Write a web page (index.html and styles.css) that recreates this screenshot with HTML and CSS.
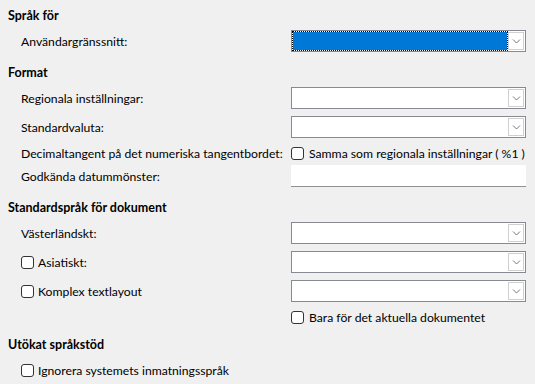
FILE: index.html
```html
<!DOCTYPE html>
<html lang="sv">
<head>
    <meta charset="UTF-8">
    <title>Språkinställningar</title>
    <link rel="stylesheet" href="styles.css">
</head>
<body>
    <div class="page">
        <h2 class="heading first">Språk för</h2>
        <div class="row">
            <span class="label">Användargränssnitt:</span>
            <div class="combo focused"><div class="field"></div><div class="drop"><svg width="9" height="5" viewBox="0 0 9 5"><path d="M1 0.5 L4.5 4 L8 0.5" fill="none" stroke="#777" stroke-width="1"/></svg></div></div>
        </div>

        <h2 class="heading">Format</h2>
        <div class="row">
            <span class="label">Regionala inställningar:</span>
            <div class="combo"><div class="field"></div><div class="drop"><svg width="9" height="5" viewBox="0 0 9 5"><path d="M1 0.5 L4.5 4 L8 0.5" fill="none" stroke="#777" stroke-width="1"/></svg></div></div>
        </div>
        <div class="row gap">
            <span class="label">Standardvaluta:</span>
            <div class="combo"><div class="field"></div><div class="drop"><svg width="9" height="5" viewBox="0 0 9 5"><path d="M1 0.5 L4.5 4 L8 0.5" fill="none" stroke="#777" stroke-width="1"/></svg></div></div>
        </div>
        <div class="row short">
            <span class="label">Decimaltangent på det numeriska tangentbordet:</span>
            <label class="check"><span class="box"></span>Samma som regionala inställningar ( %1 )</label>
        </div>
        <div class="row tight">
            <span class="label">Godkända datummönster:</span>
            <div class="entry"></div>
        </div>

        <h2 class="heading">Standardspråk för dokument</h2>
        <div class="row">
            <span class="label">Västerländskt:</span>
            <div class="combo"><div class="field"></div><div class="drop"><svg width="9" height="5" viewBox="0 0 9 5"><path d="M1 0.5 L4.5 4 L8 0.5" fill="none" stroke="#777" stroke-width="1"/></svg></div></div>
        </div>
        <div class="row gap">
            <label class="check label"><span class="box"></span>Asiatiskt:</label>
            <div class="combo"><div class="field"></div><div class="drop"><svg width="9" height="5" viewBox="0 0 9 5"><path d="M1 0.5 L4.5 4 L8 0.5" fill="none" stroke="#777" stroke-width="1"/></svg></div></div>
        </div>
        <div class="row gap">
            <label class="check label"><span class="box"></span>Komplex textlayout</label>
            <div class="combo"><div class="field"></div><div class="drop"><svg width="9" height="5" viewBox="0 0 9 5"><path d="M1 0.5 L4.5 4 L8 0.5" fill="none" stroke="#777" stroke-width="1"/></svg></div></div>
        </div>
        <div class="row short">
            <span></span>
            <label class="check"><span class="box"></span>Bara för det aktuella dokumentet</label>
        </div>

        <h2 class="heading last">Utökat språkstöd</h2>
        <div class="row short">
            <label class="check label"><span class="box"></span>Ignorera systemets inmatningsspråk</label>
        </div>
    </div>
</body>
</html>
```

FILE: styles.css
```css
body {
    margin: 0;
    background: #f0f0f0;
    font-family: Lato, "Open Sans", sans-serif;
    font-size: 12.2px;
    color: #000;
}
.page {
    padding: 6px 9px 0 8px;
}
.heading {
    margin: 0;
    height: 20px;
    line-height: 20px;
    font-size: 12.5px;
    font-weight: bold;
}
.heading.first {
    margin-bottom: 4px;
}
.heading + .row {
    margin-top: 4px;
}
.row {
    display: grid;
    grid-template-columns: 283px 235px;
    align-items: center;
    height: 22px;
    margin-top: 11px;
}
.heading.first + .row {
    margin-top: 0;
}
.row.gap {
    margin-top: 7px;
}
.row.short {
    height: 20px;
    margin-top: 5px;
}
.row.tight {
    margin-top: 2px;
}
.row + .heading {
    margin-top: 11px;
}
.row.short + .heading.last {
    margin-top: 8px;
}
.label {
    padding-left: 13px;
    white-space: nowrap;
}
.combo {
    display: flex;
    height: 22px;
    box-sizing: border-box;
    border: 1px solid #878a91;
    background: #fff;
}
.field {
    flex: 1;
}
.combo.focused .field {
    background: #0078d7;
    margin: 1px 0 1px 1px;
    outline: 1px dotted #000;
    outline-offset: 0;
}
.drop {
    width: 16px;
    margin: 1px;
    box-sizing: border-box;
    border: 1px solid #d0d0d0;
    display: flex;
    align-items: center;
    justify-content: center;
}
.entry {
    height: 22px;
    box-sizing: border-box;
    background: #fff;
    border-bottom: 1px solid #8f8f8f;
}
.check {
    display: flex;
    align-items: center;
    white-space: nowrap;
}
.box {
    flex-shrink: 0;
    width: 13px;
    height: 13px;
    box-sizing: border-box;
    border: 1px solid #333;
    border-radius: 3px;
    background: #fff;
    margin-right: 5px;
}
.label .box {
    margin-right: 4px;
}
```
